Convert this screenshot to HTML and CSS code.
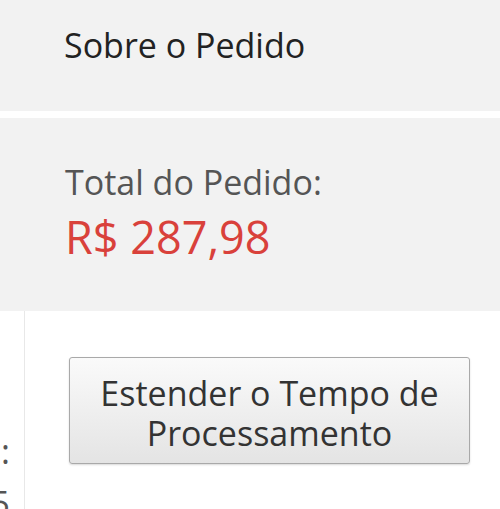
FILE: index.html
```html
<!DOCTYPE html>
<html lang="pt-BR">
<head>
  <meta charset="UTF-8" />
  <meta name="viewport" content="width=device-width, initial-scale=1.0" />
  <title>Sobre o Pedido</title>
  <link rel="stylesheet" href="styles.css">
</head>
<body>
  <div class="panel-head">Sobre o Pedido</div>

  <div class="panel-total">
    <div class="total-label">Total do Pedido:</div>
    <div class="total-value">R$ 287,98</div>
  </div>

  <div class="panel-body">
    <div class="side-col">
      <div class="side-text">Prazo:<br>15</div>
    </div>
    <div class="main-col">
      <button class="btn">Estender o Tempo de Processamento</button>
    </div>
  </div>
</body>
</html>
```

FILE: styles.css
```css
body {
  font-family: 'Open Sans', 'DejaVu Sans', sans-serif;
  margin: 0;
  background: #fff;
  overflow: hidden;
}
.panel-head {
  background: #f2f2f2;
  height: 111px;
  box-sizing: border-box;
  padding: 22px 0 0 64px;
  font-size: 34px;
  line-height: 46px;
  color: #222;
}
.panel-total {
  background: #f2f2f2;
  margin-top: 7px;
  height: 193px;
  box-sizing: border-box;
  padding: 41px 0 0 65px;
}
.total-label {
  font-size: 34px;
  line-height: 46px;
  color: #555;
}
.total-value {
  font-size: 45px;
  line-height: 56px;
  color: #d9413b;
  margin-top: 4px;
}
.panel-body {
  display: flex;
  height: 200px;
}
.side-col {
  width: 24px;
  border-right: 1px solid #e8e8e8;
  overflow: hidden;
  position: relative;
}
.side-text {
  position: absolute;
  right: 14px;
  top: 114px;
  text-align: right;
  font-size: 34px;
  line-height: 52px;
  color: #555;
  white-space: nowrap;
}
.main-col {
  padding: 46px 0 0 44px;
}
.btn {
  width: 401px;
  height: 107px;
  font-family: inherit;
  font-size: 34px;
  line-height: 40px;
  color: #333;
  background: linear-gradient(#fafafa, #e4e4e4);
  border: 1px solid #a9a9a9;
  border-radius: 3px;
  box-shadow: 0 1px 2px rgba(0, 0, 0, 0.15);
  padding: 4px 10px 0;
  cursor: pointer;
}
```
